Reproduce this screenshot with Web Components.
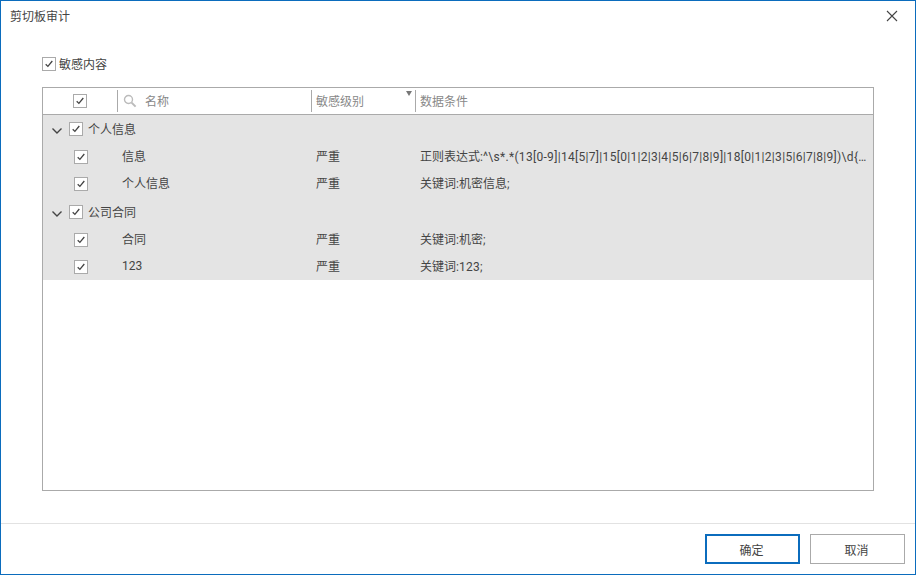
<!DOCTYPE html>
<html lang="zh"><head><meta charset="utf-8"><style>
html,body{margin:0;padding:0;background:#fff}
body{font:12px Roboto,"Noto Sans CJK SC",sans-serif;color:#444}
</style></head><body>
<audit-dialog></audit-dialog>
<script>
const CHECK=`<svg width="12" height="12" viewBox="0 0 12 12" style="display:block"><path d="M2.7 6.2 4.9 8.4 9.3 3" fill="none" stroke="#444" stroke-width="1.3"/></svg>`;
customElements.define('check-box',class extends HTMLElement{constructor(){super();this.attachShadow({mode:'open'}).innerHTML=`<style>:host{display:block;width:14px;height:14px;box-sizing:border-box;border:1px solid #aaa;background:#fff;flex:none}</style>${CHECK}`}});
customElements.define('audit-button',class extends HTMLElement{constructor(){super();this.attachShadow({mode:'open'}).innerHTML=`<style>:host{display:flex;align-items:center;justify-content:center;width:95px;height:30px;box-sizing:border-box;border:1px solid #aaa;background:#fff;color:#444;padding-right:2px}:host([primary]){border:2px solid #0b6cbd}</style><slot></slot>`}});
customElements.define('group-row',class extends HTMLElement{constructor(){super();this.attachShadow({mode:'open'}).innerHTML=`<style>:host{display:flex;align-items:center;box-sizing:border-box;height:var(--h,27px);padding:var(--p,0) 0 0 8px;background:#e4e4e4}svg{display:block;margin:3px 6px 0 0}check-box{margin-right:5px}span{position:relative;top:-1px}</style><svg width="12" height="8" viewBox="0 0 12 8"><path d="M1.5 1.5 6 6l4.5-4.5" fill="none" stroke="#444" stroke-width="1.4"/></svg><check-box></check-box><span><slot></slot></span>`}});
customElements.define('item-row',class extends HTMLElement{constructor(){super();this.attachShadow({mode:'open'}).innerHTML=`<style>:host{display:grid;grid-template-columns:79px 194px 105px 1fr;align-items:center;height:27px;background:#e4e4e4}check-box{margin-left:31px}span{position:relative;top:-1px}.c{white-space:nowrap;overflow:hidden;text-overflow:ellipsis;padding-right:5px;margin-left:-1px}</style><check-box></check-box><span><slot name="name"></slot></span><span><slot name="level"></slot></span><span class="c"><slot name="cond"></slot></span>`}});
customElements.define('audit-table',class extends HTMLElement{constructor(){super();this.attachShadow({mode:'open'}).innerHTML=`<style>
:host{display:block;width:832px;height:404px;box-sizing:border-box;border:1px solid #aaa;background:#fff}
.h{display:grid;grid-template-columns:75px 194px 104px 1fr;height:27px;box-sizing:border-box;border-bottom:1px solid #aaa;color:#888;padding-top:2px}
.h>div{display:flex;align-items:center;height:22px;position:relative}
.h span{position:relative;top:-1px}
.a{justify-content:flex-start;padding-left:30px;box-sizing:border-box;border-right:1px solid #aaa}
.b{padding-left:5px;gap:8px;border-right:1px solid #aaa}
.d{padding-left:4px}
.e{padding-left:4px;border-right:1px solid #aaa}
.tri{position:absolute;right:3px;top:1px;width:0;height:0;border:3.5px solid transparent;border-top:5px solid #777;border-bottom:0}
svg{display:block}
</style><div class="h"><div class="a"><check-box></check-box></div><div class="b"><svg width="14" height="14" viewBox="0 0 14 14"><circle cx="5.5" cy="5.5" r="4" fill="none" stroke="#bbb" stroke-width="1.4"/><path d="M8.6 8.6 12.6 12.6" stroke="#bbb" stroke-width="2"/></svg><span>名称</span></div><div class="e"><span>敏感级别</span><i class="tri"></i></div><div class="d"><span>数据条件</span></div></div><slot></slot>`}});
customElements.define('audit-dialog',class extends HTMLElement{constructor(){super();this.attachShadow({mode:'open'}).innerHTML=`<style>
:host{display:flex;flex-direction:column;width:916px;height:575px;box-sizing:border-box;border:1px solid #0b6cbd;background:#fff;overflow:hidden}
.t{display:flex;justify-content:space-between;align-items:center;height:30px;padding:0 17px 0 9px;flex:none}
.t span{position:relative;top:-1px}
.o{display:flex;align-items:center;gap:3px;padding:26px 0 0 41px;height:14px;flex:none}
.o span{position:relative;top:-1px}
.m{padding:16px 0 0 41px;flex:none}
.f{margin-top:32px;border-top:1px solid #e2e2e2;display:flex;justify-content:flex-end;gap:10px;padding:10px 10px 0 0;flex:none}
svg{display:block}
</style><div class="t"><span>剪切板审计</span><svg width="12" height="12" viewBox="0 0 12 12"><path d="M1 1 11 11M11 1 1 11" stroke="#444" stroke-width="1.1" fill="none"/></svg></div>
<div class="o"><check-box></check-box><span>敏感内容</span></div>
<div class="m"><audit-table>
<group-row style="--h:28px">个人信息</group-row>
<item-row><span slot="name">信息</span><span slot="level">严重</span><span slot="cond">正则表达式:<span style="letter-spacing:.31px">^\\s*.*(13[0-9]|14[5|7]|15[0|1|2|3|4|5|6|7|8|9]|18[0|1|2|3|5|6|7|8|9])\\d{8}.*\\s*$;</span></span></item-row>
<item-row><span slot="name">个人信息</span><span slot="level">严重</span><span slot="cond">关键词:机密信息;</span></item-row>
<group-row style="--h:29px;--p:1px">公司合同</group-row>
<item-row><span slot="name">合同</span><span slot="level">严重</span><span slot="cond">关键词:机密;</span></item-row>
<item-row><span slot="name">123</span><span slot="level">严重</span><span slot="cond">关键词:<span style="letter-spacing:.31px">123;</span></span></item-row>
</audit-table></div>
<div class="f"><audit-button primary>确定</audit-button><audit-button>取消</audit-button></div>`}});
</script></body></html>
